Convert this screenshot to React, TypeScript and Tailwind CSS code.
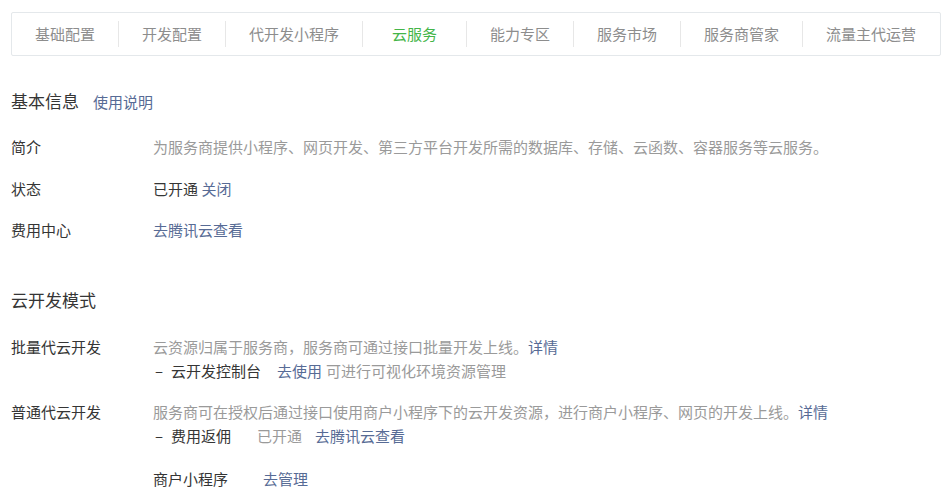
const tabs = [
  "基础配置",
  "开发配置",
  "代开发小程序",
  "云服务",
  "能力专区",
  "服务市场",
  "服务商管家",
  "流量主代运营",
];

const font = { fontFamily: '"Noto Sans CJK SC", "Noto Sans", sans-serif' };

function Link({ children }: { children: React.ReactNode }) {
  return <a className="cursor-pointer text-[#576b95]">{children}</a>;
}

function Row({ label, children }: { label: string; children: React.ReactNode }) {
  return (
    <div className="flex leading-6">
      <div className="w-[142px] shrink-0 text-[#353535]">{label}</div>
      <div className="flex-1">{children}</div>
    </div>
  );
}

export default function App() {
  return (
    <div className="min-h-[500px] bg-white px-[11px] pt-[12px] text-[15px]" style={font}>
      <div className="flex h-[44px] items-center rounded-[2px] border border-[#e4e8eb]">
        {tabs.map((t, i) => (
          <div key={t} className="flex shrink-0 items-center">
            {i > 0 && <span className="h-[26px] w-px bg-[#e7e7e7]" />}
            <span
              className={
                "min-w-[103px] whitespace-nowrap px-[23px] text-center " +
                (t === "云服务" ? "text-[#44b549]" : "text-[#8d8d8d]")
              }
            >
              {t}
            </span>
          </div>
        ))}
      </div>

      <div className="mt-[33px] flex items-baseline gap-[14px] leading-6">
        <h2 className="text-[17px] text-[#353535]">基本信息</h2>
        <Link>使用说明</Link>
      </div>

      <div className="mt-[21px] flex flex-col gap-[17.5px]">
        <Row label="简介">
          <span className="text-[#9a9a9a]">
            为服务商提供小程序、网页开发、第三方平台开发所需的数据库、存储、云函数、容器服务等云服务。
          </span>
        </Row>
        <Row label="状态">
          <span className="text-[#353535]">已开通</span> <Link>关闭</Link>
        </Row>
        <Row label="费用中心">
          <Link>去腾讯云查看</Link>
        </Row>
      </div>

      <h2 className="mt-[46px] text-[17px] leading-6 text-[#353535]">云开发模式</h2>

      <div className="mt-[23px] flex flex-col">
        <Row label="批量代云开发">
          <div className="text-[#9a9a9a]">
            云资源归属于服务商，服务商可通过接口批量开发上线。<Link>详情</Link>
          </div>
          <div className="flex">
            <span className="w-[18px] pl-[2px] text-[#353535]">–</span>
            <span className="text-[#353535]">云开发控制台</span>
            <span className="ml-[16px]">
              <Link>去使用</Link>
            </span>
            <span className="ml-[4px] text-[#9a9a9a]">可进行可视化环境资源管理</span>
          </div>
        </Row>
        <div className="mt-[17px]">
          <Row label="普通代云开发">
            <div className="text-[#9a9a9a]">
              服务商可在授权后通过接口使用商户小程序下的云开发资源，进行商户小程序、网页的开发上线。
              <Link>详情</Link>
            </div>
            <div className="flex">
              <span className="w-[18px] pl-[2px] text-[#353535]">–</span>
              <span className="text-[#353535]">费用返佣</span>
              <span className="ml-[26px] text-[#9a9a9a]">已开通</span>
              <span className="ml-[13px]">
                <Link>去腾讯云查看</Link>
              </span>
            </div>
          </Row>
        </div>
        <div className="mt-[19px] flex pl-[142px] leading-6">
          <span className="text-[#353535]">商户小程序</span>
          <span className="ml-[35px]">
            <Link>去管理</Link>
          </span>
        </div>
      </div>
    </div>
  );
}
